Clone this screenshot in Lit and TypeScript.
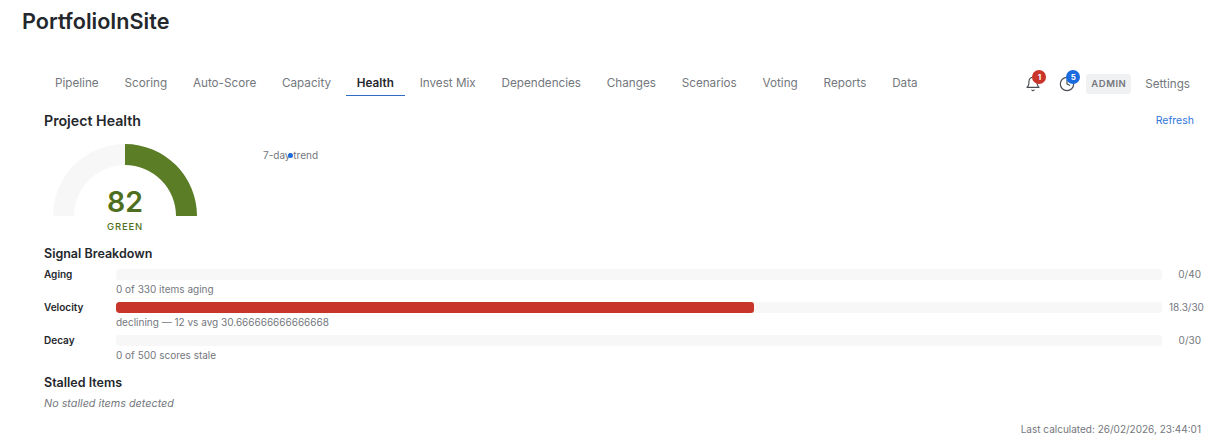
import { LitElement, html, css } from 'lit'
import { customElement, state } from 'lit/decorators.js'

const TABS = ['Pipeline', 'Scoring', 'Auto-Score', 'Capacity', 'Health', 'Invest Mix', 'Dependencies', 'Changes', 'Scenarios', 'Voting', 'Reports', 'Data']

const SIGNALS = [
  { name: 'Aging', pct: 0, value: '0/40', note: '0 of 330 items aging' },
  { name: 'Velocity', pct: 61, value: '18.3/30', note: 'declining — 12 vs avg 30.666666666666668' },
  { name: 'Decay', pct: 0, value: '0/30', note: '0 of 500 scores stale' },
]

@customElement('app-root')
export class AppRoot extends LitElement {
  static styles = css`
    :host {
      display: block;
      height: 440px;
      overflow: hidden;
      background: #fff;
      color: #24272c;
      font-family: Inter, 'Liberation Sans', sans-serif;
    }

    .title {
      margin: 0;
      padding: 9px 0 0 22px;
      font-size: 21.6px;
      line-height: 24px;
      font-weight: 600;
    }

    .topbar {
      display: flex;
      align-items: center;
      justify-content: space-between;
      margin-top: 34px;
      padding: 0 22px 0 44px;
      height: 29px;
    }

    .tabs {
      display: flex;
      gap: 3.8px;
    }

    .tab {
      padding: 8px 11px 4px;
      font-size: 11.7px;
      line-height: 16px;
      color: #74777d;
      border-bottom: 1px solid transparent;
    }

    .tab.active {
      color: #24272c;
      font-weight: 600;
      border-bottom-color: #2f6bc4;
    }

    .actions {
      display: flex;
      align-items: center;
      padding-top: 4px;
    }

    .icon-btn {
      position: relative;
      width: 16px;
      height: 16px;
      display: block;
    }

    .icon-btn svg {
      display: block;
    }

    .icon-btn.clock {
      margin-left: 18px;
      margin-right: 11px;
    }

    .badge {
      position: absolute;
      top: -6px;
      left: 7px;
      width: 14px;
      height: 14px;
      border-radius: 50%;
      color: #fff;
      font-size: 8px;
      font-weight: 700;
      line-height: 14px;
      text-align: center;
    }

    .badge.red {
      background: #c9342b;
    }

    .badge.blue {
      background: #1a6ae0;
    }

    .role {
      padding: 3px 5px;
      border-radius: 3px;
      background: #f0f1f3;
      color: #74777d;
      font-size: 9.5px;
      line-height: 14px;
      font-weight: 600;
      letter-spacing: 0.5px;
    }

    .settings {
      margin-left: 14px;
      font-size: 11.7px;
      color: #74777d;
    }

    .content {
      padding: 16px 11px 0 44px;
    }

    .head {
      display: flex;
      align-items: center;
      justify-content: space-between;
      padding-right: 7px;
    }

    h2 {
      margin: 0;
      font-size: 14.2px;
      line-height: 18px;
      font-weight: 600;
    }

    .refresh {
      padding-bottom: 2px;
      font-size: 10.5px;
      color: #2f76d8;
    }

    .overview {
      display: flex;
      align-items: flex-start;
      margin-top: 14px;
      height: 101px;
    }

    .gauge {
      position: relative;
      margin-left: 9px;
      width: 144px;
      height: 90px;
    }

    .gauge svg {
      display: block;
    }

    .score {
      position: absolute;
      left: 0;
      right: 0;
      top: 41px;
      text-align: center;
      font-size: 28.5px;
      line-height: 34px;
      font-weight: 600;
      color: #4f6f20;
    }

    .grade {
      position: absolute;
      left: 0;
      right: 0;
      top: 77px;
      text-align: center;
      font-size: 9.5px;
      line-height: 12px;
      font-weight: 500;
      letter-spacing: 0.8px;
      color: #4f6f20;
    }

    .trend {
      position: relative;
      margin-left: 66px;
      margin-top: 5px;
      font-size: 10px;
      line-height: 12px;
      color: #74777d;
    }

    .dot {
      position: absolute;
      left: 25px;
      top: 4px;
      width: 5px;
      height: 5px;
      border-radius: 50%;
      background: #1a6ae0;
    }

    .signals h2,
    .stalled h2 {
      font-size: 12.5px;
    }

    .rows {
      margin-top: 5px;
      display: flex;
      flex-direction: column;
      gap: 5px;
    }

    .row {
      display: grid;
      grid-template-columns: 72px 1fr 39px;
      align-items: center;
    }

    .name {
      font-size: 10px;
      line-height: 12px;
      font-weight: 600;
    }

    .track {
      height: 11px;
      border-radius: 3px;
      background: #f7f7f7;
      overflow: hidden;
    }

    .fill {
      height: 100%;
      border-radius: 3px;
      background: #c8352b;
    }

    /* the long value spills past the right edge, as in the reference */
    .value {
      width: 32px;
      margin-left: 7px;
      font-size: 10px;
      line-height: 12px;
      color: #74777d;
      text-align: right;
      white-space: nowrap;
    }

    .note {
      grid-column: 2 / 4;
      margin-top: 2px;
      font-size: 10px;
      line-height: 14px;
      color: #74777d;
    }

    .stalled {
      margin-top: 12px;
    }

    .empty {
      margin-top: 5px;
      font-size: 10.8px;
      line-height: 14px;
      font-style: italic;
      color: #74777d;
    }

    .stamp {
      margin-top: 12px;
      text-align: right;
      font-size: 10px;
      line-height: 12px;
      color: #74777d;
    }
  `

  @state() private active = 'Health'

  render() {
    return html`
      <h1 class="title">PortfolioInSite</h1>
      <div class="topbar">
        <nav class="tabs">
          ${TABS.map(t => html`<div class="tab ${t === this.active ? 'active' : ''}">${t}</div>`)}
        </nav>
        <div class="actions">
          <div class="icon-btn">
            <svg width="16" height="16" viewBox="0 0 24 24" fill="none" stroke="#4a4d53" stroke-width="1.75" stroke-linecap="round" stroke-linejoin="round">
              <path d="M18 8a6 6 0 0 0-12 0c0 7-3 9-3 9h18s-3-2-3-9"></path>
              <path d="M13.7 21a2 2 0 0 1-3.4 0"></path>
            </svg>
            <span class="badge red">1</span>
          </div>
          <div class="icon-btn clock">
            <svg width="16" height="16" viewBox="0 0 24 24" fill="none" stroke="#4a4d53" stroke-width="1.75" stroke-linecap="round" stroke-linejoin="round">
              <circle cx="12" cy="12" r="10"></circle>
              <path d="M12 6v6l4 2"></path>
            </svg>
            <span class="badge blue">5</span>
          </div>
          <span class="role">ADMIN</span>
          <span class="settings">Settings</span>
        </div>
      </div>
      <main class="content">
        <div class="head">
          <h2>Project Health</h2>
          <span class="refresh">Refresh</span>
        </div>
        <div class="overview">
          <div class="gauge">
            <svg width="144" height="72" viewBox="0 0 144 72">
              <path d="M0 72A72 72 0 0 1 144 72H123A51 51 0 0 0 21 72Z" fill="#f7f7f7"></path>
              <path d="M72 0A72 72 0 0 1 144 72H123A51 51 0 0 0 72 21Z" fill="#5a7d26"></path>
            </svg>
            <div class="score">82</div>
            <div class="grade">GREEN</div>
          </div>
          <div class="trend">7-day trend<span class="dot"></span></div>
        </div>
        <section class="signals">
          <h2>Signal Breakdown</h2>
          <div class="rows">
            ${SIGNALS.map(s => html`
              <div class="row">
                <div class="name">${s.name}</div>
                <div class="track"><div class="fill" style="width:${s.pct}%"></div></div>
                <div class="value">${s.value}</div>
                <div class="note">${s.note}</div>
              </div>
            `)}
          </div>
        </section>
        <section class="stalled">
          <h2>Stalled Items</h2>
          <div class="empty">No stalled items detected</div>
        </section>
        <div class="stamp">Last calculated: 26/02/2026, 23:44:01</div>
      </main>
    `
  }
}
